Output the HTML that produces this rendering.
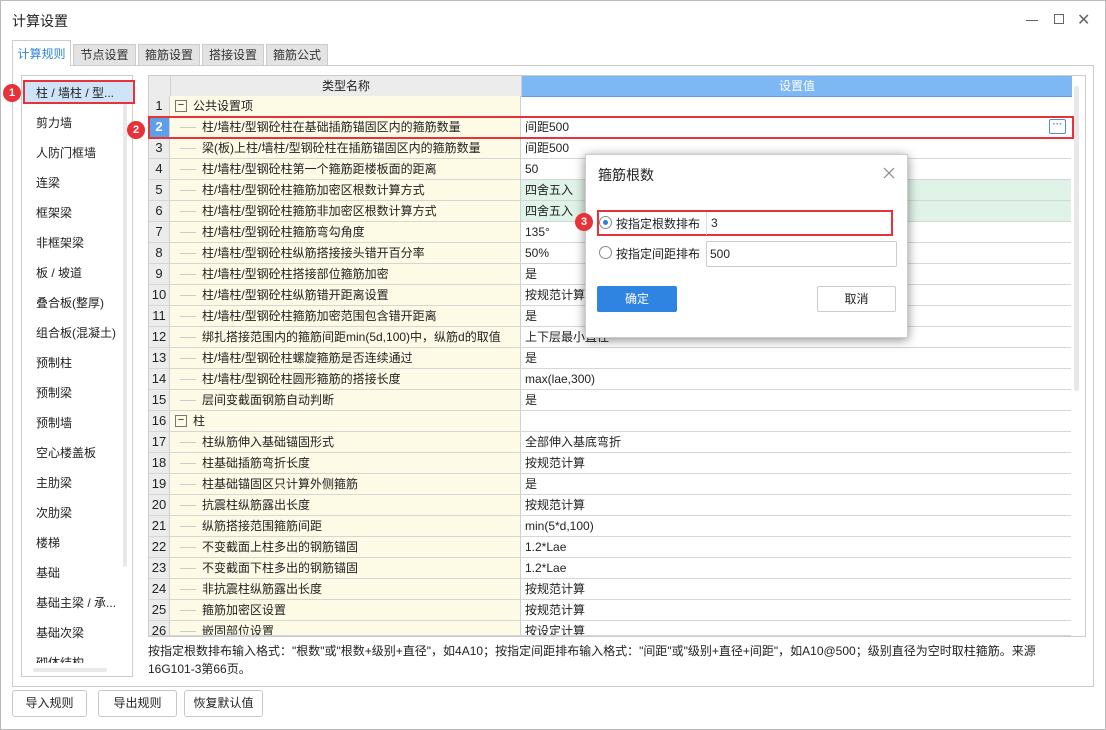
<!DOCTYPE html>
<html><head><meta charset="utf-8"><style>
*{box-sizing:border-box;margin:0;padding:0}
body{width:1106px;height:730px;background:#fff;font-family:"Liberation Sans","Noto Sans CJK SC",sans-serif;font-size:12px;color:#222;position:relative;overflow:hidden}
.win{position:absolute;left:0;top:0;width:1106px;height:730px;border:1px solid #bbb}
.abs{position:absolute}
.tab{position:absolute;top:44px;height:21px;background:#e3e3e3;border:1px solid #ccc;border-bottom:none;font-size:12px;line-height:20px;text-align:center;color:#333}
.li{position:absolute;left:36px;font-size:12px;color:#222}
.row{position:absolute;left:149px;width:922px;height:21px;border-bottom:1px solid #d6d6d6}
.num{position:absolute;left:0;width:21px;height:20px;background:#ececec;border-right:1px solid #d0d0d0;text-align:center;line-height:20px;font-size:13px}
.nm{position:absolute;left:21px;width:351px;height:20px;background:#fdfae6;border-right:1px solid #d0d0d0;line-height:20px}
.val{position:absolute;left:372px;width:550px;height:20px;line-height:20px;padding-left:4px}
.nm span{position:absolute;left:32px}
.nm i{position:absolute;left:10px;top:10px;width:16px;border-top:1px solid #ccc}
.nm b{font-weight:normal;position:absolute;left:5px;top:4px;width:12px;height:12px;border:1px solid #777;line-height:9px;text-align:center;font-size:11px}
.btn{position:absolute;height:27px;border:1px solid #c8c8c8;border-radius:3px;background:#fff;text-align:center;line-height:25px;font-size:12px}
.badge{position:absolute;width:18px;height:18px;border-radius:9px;background:#e8323a;color:#fff;font-size:11px;text-align:center;line-height:18px;font-weight:bold}
</style></head><body>
<div class="win"></div>
<div class="abs" style="left:12px;top:11px;font-size:14px">计算设置</div>
<div class="abs" style="left:1026px;top:20px;width:12px;border-top:1px solid #666"></div>
<div class="abs" style="left:1054px;top:14px;width:10px;height:10px;border:1px solid #666"></div>
<div class="abs" style="left:1077px;top:10px;font-size:16px;color:#666">✕</div>

<div class="tab" style="left:12px;width:59px;top:40px;height:26px;background:#fff;color:#2f86d8;line-height:26px;z-index:2">计算规则</div>
<div class="tab" style="left:73px;width:63px">节点设置</div>
<div class="tab" style="left:138px;width:62px">箍筋设置</div>
<div class="tab" style="left:202px;width:62px">搭接设置</div>
<div class="tab" style="left:266px;width:62px">箍筋公式</div>
<div class="abs" style="left:12px;top:65px;width:1082px;height:622px;border:1px solid #ccc"></div>

<div class="abs" style="left:21px;top:75px;width:112px;height:602px;border:1px solid #ccc"></div>
<div class="abs" style="left:123px;top:87px;width:4px;height:480px;background:#e8e8e8;border-radius:2px"></div>
<div class="abs" style="left:33px;top:668px;width:74px;height:4px;background:#e8e8e8;border-radius:2px"></div>
<div class="abs" style="left:23px;top:80px;width:112px;height:24px;background:#cfe4f8;border:2px solid #e8323a"></div>
<div class="li" style="top:84px">柱 / 墙柱 / 型...</div>
<div class="li" style="top:114px">剪力墙</div>
<div class="li" style="top:144px">人防门框墙</div>
<div class="li" style="top:174px">连梁</div>
<div class="li" style="top:204px">框架梁</div>
<div class="li" style="top:234px">非框架梁</div>
<div class="li" style="top:264px">板 / 坡道</div>
<div class="li" style="top:294px">叠合板(整厚)</div>
<div class="li" style="top:324px">组合板(混凝土)</div>
<div class="li" style="top:354px">预制柱</div>
<div class="li" style="top:384px">预制梁</div>
<div class="li" style="top:414px">预制墙</div>
<div class="li" style="top:444px">空心楼盖板</div>
<div class="li" style="top:474px">主肋梁</div>
<div class="li" style="top:504px">次肋梁</div>
<div class="li" style="top:534px">楼梯</div>
<div class="li" style="top:564px">基础</div>
<div class="li" style="top:594px">基础主梁 / 承...</div>
<div class="li" style="top:624px">基础次梁</div>
<div class="abs" style="left:36px;top:654px;height:9px;overflow:hidden;width:80px"><div style="font-size:12px">砌体结构</div></div>
<div class="badge" style="left:3px;top:84px">1</div>

<div class="abs" style="left:148px;top:75px;width:938px;height:562px;border:1px solid #ccc;overflow:hidden">
<div class="abs" style="left:0;top:0;width:22px;height:21px;background:#ececec;border-right:1px solid #d0d0d0;border-bottom:1px solid #ccc"></div>
<div class="abs" style="left:22px;top:0;width:351px;height:21px;background:#ececec;border-right:1px solid #d0d0d0;border-bottom:1px solid #ccc;text-align:center;line-height:21px">类型名称</div>
<div class="abs" style="left:373px;top:0;width:550px;height:21px;background:#7db8f5;border-bottom:1px solid #5b9ee6;text-align:center;line-height:21px;color:#fff">设置值</div>
<div class="abs" style="left:925px;top:10px;width:5px;height:305px;background:#e8e8e8;border-radius:2px"></div>
</div>
<div id="rows"></div>
<div class="abs" style="left:148px;top:116px;width:926px;height:23px;border:2px solid #e8323a"></div>
<div class="abs" style="left:1049px;top:119px;width:17px;height:15px;border:1px solid #4a90e2;border-radius:2px;color:#4a90e2;font-size:10px;line-height:9px;text-align:center;font-weight:bold">···</div>
<div class="badge" style="left:127px;top:121px">2</div>

<div class="abs" style="left:148px;top:642px;font-size:12px;line-height:18px;width:930px">按指定根数排布输入格式："根数"或"根数+级别+直径"，如4A10；按指定间距排布输入格式："间距"或"级别+直径+间距"，如A10@500；级别直径为空时取柱箍筋。来源16G101-3第66页。</div>

<div class="btn" style="left:12px;top:690px;width:75px">导入规则</div>
<div class="btn" style="left:98px;top:690px;width:79px">导出规则</div>
<div class="btn" style="left:184px;top:690px;width:79px">恢复默认值</div>

<div class="abs" style="left:585px;top:154px;width:323px;height:184px;background:#fff;border:1px solid #ccc;box-shadow:0 2px 10px rgba(0,0,0,.45)">
<div class="abs" style="left:12px;top:10px;font-size:14px">箍筋根数</div>
<svg class="abs" style="left:297px;top:12px" width="12" height="12"><path d="M1 1L11 11M11 1L1 11" stroke="#888" stroke-width="1.2"/></svg>
<div class="abs" style="left:11px;top:55px;width:296px;height:26px;border:2px solid #e8323a"></div>
<div class="abs" style="left:13px;top:61px;width:13px;height:13px;border-radius:7px;border:1px solid #888"><div style="margin:3px;width:5px;height:5px;border-radius:3px;background:#2d7ddc"></div></div>
<div class="abs" style="left:30px;top:60px">按指定根数排布</div>
<div class="abs" style="left:120px;top:57px;width:187px;height:23px;border-left:1px solid #ddd;padding-left:4px;line-height:22px">3</div>
<div class="abs" style="left:13px;top:91px;width:13px;height:13px;border-radius:7px;border:1px solid #888"></div>
<div class="abs" style="left:30px;top:90px">按指定间距排布</div>
<div class="abs" style="left:120px;top:86px;width:191px;height:26px;border:1px solid #ccc;border-radius:2px;padding-left:3px;line-height:24px">500</div>
<div class="abs" style="left:11px;top:131px;width:80px;height:26px;background:#2e84e0;border-radius:2px;color:#fff;text-align:center;line-height:26px">确定</div>
<div class="abs" style="left:231px;top:131px;width:79px;height:26px;border:1px solid #ccc;border-radius:2px;text-align:center;line-height:24px">取消</div>
</div>
<div class="badge" style="left:575px;top:213px">3</div>

<script>
var d=[["1","公共设置项","",1],["2","柱/墙柱/型钢砼柱在基础插筋锚固区内的箍筋数量","间距500"],["3","梁(板)上柱/墙柱/型钢砼柱在插筋锚固区内的箍筋数量","间距500"],["4","柱/墙柱/型钢砼柱第一个箍筋距楼板面的距离","50"],["5","柱/墙柱/型钢砼柱箍筋加密区根数计算方式","四舍五入",2],["6","柱/墙柱/型钢砼柱箍筋非加密区根数计算方式","四舍五入",2],["7","柱/墙柱/型钢砼柱箍筋弯勾角度","135°"],["8","柱/墙柱/型钢砼柱纵筋搭接接头错开百分率","50%"],["9","柱/墙柱/型钢砼柱搭接部位箍筋加密","是"],["10","柱/墙柱/型钢砼柱纵筋错开距离设置","按规范计算"],["11","柱/墙柱/型钢砼柱箍筋加密范围包含错开距离","是"],["12","绑扎搭接范围内的箍筋间距min(5d,100)中，纵筋d的取值","上下层最小直径"],["13","柱/墙柱/型钢砼柱螺旋箍筋是否连续通过","是"],["14","柱/墙柱/型钢砼柱圆形箍筋的搭接长度","max(lae,300)"],["15","层间变截面钢筋自动判断","是"],["16","柱","",1],["17","柱纵筋伸入基础锚固形式","全部伸入基底弯折"],["18","柱基础插筋弯折长度","按规范计算"],["19","柱基础锚固区只计算外侧箍筋","是"],["20","抗震柱纵筋露出长度","按规范计算"],["21","纵筋搭接范围箍筋间距","min(5*d,100)"],["22","不变截面上柱多出的钢筋锚固","1.2*Lae"],["23","不变截面下柱多出的钢筋锚固","1.2*Lae"],["24","非抗震柱纵筋露出长度","按规范计算"],["25","箍筋加密区设置","按规范计算"],["26","嵌固部位设置","按设定计算"]];
var h="";d.forEach(function(r,i){var t=96+i*21;var hgt=i==25?15:21;
var nb=r[0]=="2"?"background:#5d9fe8;color:#fff;font-weight:bold":"";
var vb=r[3]==2?"background:#dff3e8":"";
var nm=r[3]==1?'<b>−</b><span style="left:23px">'+r[1]+'</span>':'<i></i><span>'+r[1]+'</span>';
h+='<div class="row" style="top:'+t+'px;height:'+hgt+'px;overflow:hidden"><div class="num" style="'+nb+'">'+r[0]+'</div><div class="nm">'+nm+'</div><div class="val" style="'+vb+'">'+r[2]+'</div></div>';});
document.getElementById("rows").innerHTML=h;
</script>
</body></html>
